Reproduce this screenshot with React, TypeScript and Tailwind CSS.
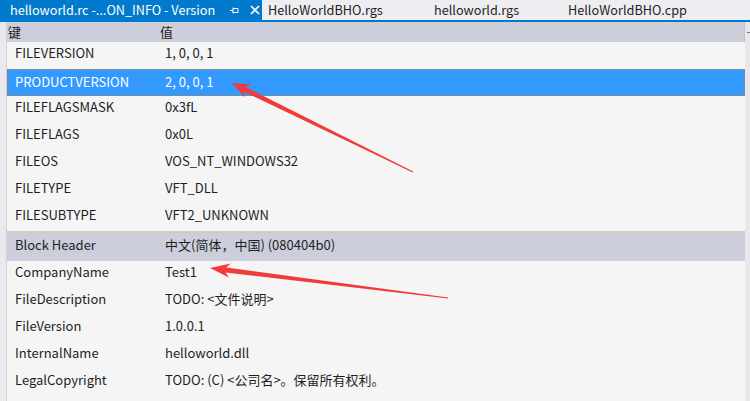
import React from "react";

const FONT = { fontFamily: '"Noto Sans CJK SC", "Noto Sans", sans-serif' };

const topRows: [string, string][] = [
  ["FILEVERSION", "1, 0, 0, 1"],
  ["PRODUCTVERSION", "2, 0, 0, 1"],
  ["FILEFLAGSMASK", "0x3fL"],
  ["FILEFLAGS", "0x0L"],
  ["FILEOS", "VOS_NT_WINDOWS32"],
  ["FILETYPE", "VFT_DLL"],
  ["FILESUBTYPE", "VFT2_UNKNOWN"],
];

const bottomRows: [string, string][] = [
  ["CompanyName", "Test1"],
  ["FileDescription", "TODO: <文件说明>"],
  ["FileVersion", "1.0.0.1"],
  ["InternalName", "helloworld.dll"],
  ["LegalCopyright", "TODO: (C) <公司名>。保留所有权利。"],
];

function Row({ k, v, selected }: { k: string; v: string; selected?: boolean }) {
  if (selected) {
    return (
      <div className="flex h-[27px] bg-[#3399ff] border border-dotted border-[#b8823a] text-white text-[13px] leading-[24px]">
        <div className="w-[150px] pl-[7px]">{k}</div>
        <div className="pl-[7px]">{v}</div>
      </div>
    );
  }
  return (
    <div className="flex h-[27px] text-[#1e1e1e] text-[13px] leading-[22px]">
      <div className="w-[150px] pl-[8px]">{k}</div>
      <div className="pl-[8px]">{v}</div>
    </div>
  );
}

function PinIcon() {
  return (
    <svg width="9" height="9" viewBox="0 0 9 9" className="text-white">
      <path d="M0 4.5H3M3 1.5V7.5M3 2.5H8V6.5H3" stroke="currentColor" strokeWidth="1" fill="none" />
    </svg>
  );
}

function CloseIcon() {
  return (
    <svg width="10" height="10" viewBox="0 0 10 10">
      <path d="M1 1L9 9M9 1L1 9" stroke="white" strokeWidth="1.6" />
    </svg>
  );
}

export default function App() {
  return (
    <div className="relative w-[750px] h-[401px] overflow-hidden bg-[#f5f5f5]" style={FONT}>
      {/* tab strip */}
      <div className="flex h-[20px] bg-[#eeeef2] text-[12.7px] leading-[20px] text-[#1e1e1e]">
        <div className="flex items-center w-[262px] bg-[#007acc] text-white pl-[10px]">
          <span className="w-[214px] whitespace-nowrap">helloworld.rc -...ON_INFO - Version</span>
          <span className="ml-[6px] flex items-center"><PinIcon /></span>
          <span className="ml-[11px] flex items-center"><CloseIcon /></span>
        </div>
        <div className="w-[166px] pl-[6px] whitespace-nowrap">HelloWorldBHO.rgs</div>
        <div className="w-[134px] pl-[6px] whitespace-nowrap">helloworld.rgs</div>
        <div className="pl-[6px] whitespace-nowrap">HelloWorldBHO.cpp</div>
      </div>
      <div className="h-[2px] bg-[#007acc]" />

      {/* body */}
      <div className="flex h-[379px]">
        <div className="w-[7px] bg-[#eaeaee] border-r border-[#d2d3da]" />
        <div className="flex-1 flex flex-col">
          <div className="flex h-[20px] bg-[#cccedb] text-[13px] leading-[20px] text-[#1e1e1e] border-r border-[#c4c6b8]">
            <div className="w-[152px] pl-[1px]">键</div>
            <div className="pl-[1px]">值</div>
          </div>
          {topRows.map(([k, v], i) => (
            <Row key={k} k={k} v={v} selected={i === 1} />
          ))}
          <div className="h-[2px] bg-[#cbcdbd]" />
          <div className="flex h-[28px] bg-[#cccedb] text-[#1e1e1e] text-[13px] leading-[24px]">
            <div className="w-[150px] pl-[8px]">Block Header</div>
            <div className="pl-[8px]">中文(简体，中国) (080404b0)</div>
          </div>
          {bottomRows.map(([k, v]) => (
            <Row key={k} k={k} v={v} />
          ))}
        </div>
        <div className="relative w-[5px] bg-[#e8e8ec]">
          <div className="absolute left-[2px] top-[10px] w-[3px] h-[1px] bg-[#717171]" />
        </div>
      </div>

      {/* annotation arrows */}
      <svg className="absolute inset-0 pointer-events-none" width="750" height="401" viewBox="0 0 750 401">
        <polygon
          points="232,83 251.2,84.6 245.7,87 413.2,171.6 412.8,172.4 243.5,91.4 245,97.2"
          fill="#f23a3a"
        />
        <polygon
          points="210,268 230.7,263.6 226.2,267.5 448.1,297.5 447.9,298.5 225.6,272.5 228.9,277.4"
          fill="#f23a3a"
        />
      </svg>
    </div>
  );
}
